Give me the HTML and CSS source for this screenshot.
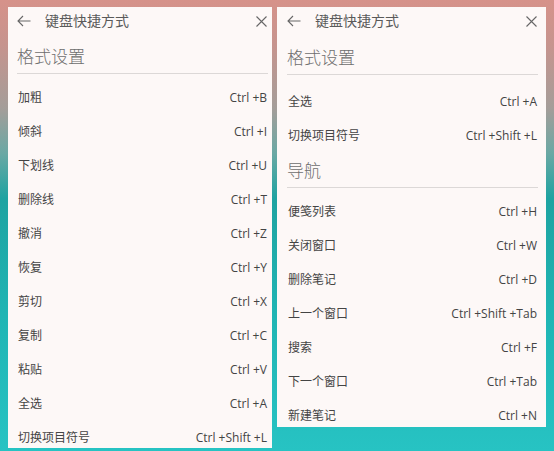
FILE: index.html
```html
<!DOCTYPE html>
<html lang="zh-CN">
<head>
<meta charset="utf-8">
<title>键盘快捷方式</title>
<link rel="stylesheet" href="styles.css">
</head>
<body>
<div class="panel panel-left">
  <div class="header">
    <svg class="icon-back" width="14" height="12" viewBox="0 0 14 12"><path d="M13.5 6H1M6 1 1 6l5 5" fill="none" stroke="#666" stroke-width="1.1"/></svg>
    <span class="title">键盘快捷方式</span>
    <svg class="icon-close" width="11" height="11" viewBox="0 0 11 11"><path d="M0.5 0.5l10 10M10.5 0.5l-10 10" fill="none" stroke="#666" stroke-width="1.1"/></svg>
  </div>
  <div class="section">
    <div class="heading">格式设置</div>
    <div class="list">
      <div class="row"><span>加粗</span><span class="key">Ctrl +B</span></div>
      <div class="row"><span>倾斜</span><span class="key">Ctrl +I</span></div>
      <div class="row"><span>下划线</span><span class="key">Ctrl +U</span></div>
      <div class="row"><span>删除线</span><span class="key">Ctrl +T</span></div>
      <div class="row"><span>撤消</span><span class="key">Ctrl +Z</span></div>
      <div class="row"><span>恢复</span><span class="key">Ctrl +Y</span></div>
      <div class="row"><span>剪切</span><span class="key">Ctrl +X</span></div>
      <div class="row"><span>复制</span><span class="key">Ctrl +C</span></div>
      <div class="row"><span>粘贴</span><span class="key">Ctrl +V</span></div>
      <div class="row"><span>全选</span><span class="key">Ctrl +A</span></div>
      <div class="row"><span>切换项目符号</span><span class="key">Ctrl +Shift +L</span></div>
    </div>
  </div>
</div>
<div class="panel panel-right">
  <div class="header">
    <svg class="icon-back" width="14" height="12" viewBox="0 0 14 12"><path d="M13.5 6H1M6 1 1 6l5 5" fill="none" stroke="#666" stroke-width="1.1"/></svg>
    <span class="title">键盘快捷方式</span>
    <svg class="icon-close" width="11" height="11" viewBox="0 0 11 11"><path d="M0.5 0.5l10 10M10.5 0.5l-10 10" fill="none" stroke="#666" stroke-width="1.1"/></svg>
  </div>
  <div class="section section-first">
    <div class="heading">格式设置</div>
    <div class="list">
      <div class="row"><span>全选</span><span class="key">Ctrl +A</span></div>
      <div class="row"><span>切换项目符号</span><span class="key">Ctrl +Shift +L</span></div>
    </div>
  </div>
  <div class="section">
    <div class="heading">导航</div>
    <div class="list">
      <div class="row"><span>便笺列表</span><span class="key">Ctrl +H</span></div>
      <div class="row"><span>关闭窗口</span><span class="key">Ctrl +W</span></div>
      <div class="row"><span>删除笔记</span><span class="key">Ctrl +D</span></div>
      <div class="row"><span>上一个窗口</span><span class="key">Ctrl +Shift +Tab</span></div>
      <div class="row"><span>搜索</span><span class="key">Ctrl +F</span></div>
      <div class="row"><span>下一个窗口</span><span class="key">Ctrl +Tab</span></div>
      <div class="row"><span>新建笔记</span><span class="key">Ctrl +N</span></div>
    </div>
  </div>
</div>
</body>
</html>
```

FILE: styles.css
```css
html, body {
  margin: 0;
  height: 100%;
}
body {
  width: 554px;
  height: 451px;
  overflow: hidden;
  box-sizing: border-box;
  padding: 7px 0 0 8px;
  display: flex;
  align-items: flex-start;
  gap: 5px;
  font-family: "Open Sans", "Noto Sans CJK SC", sans-serif;
  color: #444;
  background: linear-gradient(180deg, #d6928a 0%, #c6948e 10%, #a49d99 24%, #6aa8a4 34%, #1ea3a1 44%, #1fb5b4 70%, #27c3c3 100%);
}
.panel {
  background: #fdf8f7;
  overflow: hidden;
  box-sizing: border-box;
}
.panel-left {
  width: 264px;
  height: 441px;
  padding: 0 4px 0 9px;
}
.panel-right {
  width: 269px;
  height: 420px;
  padding: 0 8px 0 10px;
}
.header {
  height: 28px;
  display: flex;
  align-items: center;
}
.icon-back {
  flex: none;
  margin-right: 14px;
}
.title {
  flex: 1;
  font-size: 14px;
  color: #5a5a5a;
  line-height: 20px;
}
.icon-close {
  flex: none;
  margin-right: 1px;
}
.heading {
  margin-top: 10px;
  font-size: 17px;
  font-weight: 300;
  line-height: 24px;
  color: #6e6e6e;
  padding-bottom: 4px;
  border-bottom: 1px solid #dcd8d7;
}
.section + .section .heading {
  margin-top: 7px;
}
.section-first .heading {
  margin-top: 11px;
}
.list {
  margin-top: 6px;
}
.section-first .list {
  margin-top: 9px;
}
.row {
  height: 34px;
  display: flex;
  align-items: center;
  justify-content: space-between;
  font-size: 12px;
  padding-left: 1px;
}
.key {
  color: #444;
  padding-right: 1px;
}
```
